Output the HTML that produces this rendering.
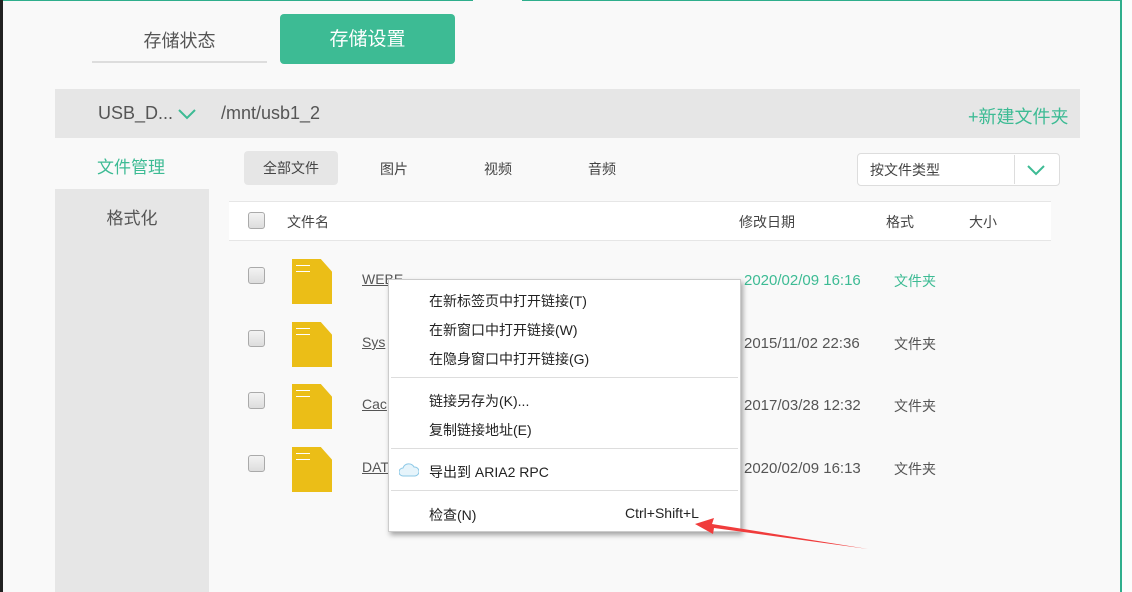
<!DOCTYPE html>
<html><head><meta charset="utf-8"><style>
*{margin:0;padding:0;box-sizing:border-box}
body{width:1132px;height:592px;position:relative;overflow:hidden;background:#f9f9f9;font-family:"Liberation Sans","Noto Sans CJK SC",sans-serif;color:#555}
.a{position:absolute;white-space:nowrap}
.cb{position:absolute;width:17px;height:17px;border:1px solid #aaa;border-radius:3px;background:linear-gradient(#f3f3f3,#ddd)}
.fold{position:absolute;width:40px;height:45px;background:#ebbe17;clip-path:polygon(0 0,72% 0,100% 28%,100% 100%,0 100%)}
.fold:before{content:"";position:absolute;left:4px;top:6px;width:14px;height:5px;border-top:1px solid #fff;border-bottom:1px solid #fff}
.menu .a{font-size:14px;color:#222}
.sep{position:absolute;left:2px;right:2px;height:1px;background:#ddd}
</style></head><body>
<div class="a" style="left:0;top:0;width:3px;height:592px;background:#222"></div>
<div class="a" style="left:3px;top:0;width:470px;height:1px;background:#2eae8c"></div>
<div class="a" style="left:522px;top:0;width:600px;height:1px;background:#2eae8c"></div>
<div class="a" style="left:1120px;top:0;width:2px;height:592px;background:#2eae8c"></div>
<div class="a" style="left:1122px;top:0;width:10px;height:592px;background:#fcfcfc"></div>

<div class="a" style="left:92px;top:27px;width:175px;text-align:center;font-size:18px;color:#555">存储状态</div>
<div class="a" style="left:92px;top:61px;width:175px;height:2px;background:#ddd"></div>
<div class="a" style="left:280px;top:14px;width:175px;height:50px;background:#3dbb94;border-radius:4px;color:#fff;font-size:19px;text-align:center;line-height:52px">存储设置</div>

<div class="a" style="left:55px;top:89px;width:1025px;height:49px;background:#e6e6e6"></div>
<div class="a" style="left:98px;top:103px;font-size:18px;color:#555">USB_D...</div>
<svg class="a" style="left:178px;top:108px" width="18" height="12"><path d="M1 2l8 8 8-8" stroke="#3dbb94" stroke-width="2" fill="none"/></svg>
<div class="a" style="left:221px;top:103px;font-size:18px;color:#555">/mnt/usb1_2</div>
<div class="a" style="left:968px;top:103px;font-size:18px;color:#3dbb94">+新建文件夹</div>

<div class="a" style="left:97px;top:153px;font-size:17px;color:#3dbb94">文件管理</div>
<div class="a" style="left:55px;top:189px;width:154px;height:403px;background:#e6e6e6"></div>
<div class="a" style="left:55px;top:204px;width:154px;text-align:center;font-size:17px;color:#555">格式化</div>

<div class="a" style="left:244px;top:151px;width:94px;height:34px;background:#e6e6e6;border-radius:4px;font-size:14px;color:#444;text-align:center;line-height:34px">全部文件</div>
<div class="a" style="left:380px;top:159px;font-size:14px;color:#444">图片</div>
<div class="a" style="left:484px;top:159px;font-size:14px;color:#444">视频</div>
<div class="a" style="left:588px;top:159px;font-size:14px;color:#444">音频</div>
<div class="a" style="left:857px;top:153px;width:203px;height:33px;border:1px solid #ddd;border-radius:4px;background:#fff"></div>
<div class="a" style="left:870px;top:160px;font-size:14px;color:#444">按文件类型</div>
<div class="a" style="left:1014px;top:155px;width:1px;height:29px;background:#ddd"></div>
<svg class="a" style="left:1027px;top:164px" width="18" height="12"><path d="M1 2l8 8 8-8" stroke="#3dbb94" stroke-width="2" fill="none"/></svg>

<div class="a" style="left:229px;top:201px;width:822px;height:40px;background:#fff;border-top:1px solid #e6e6e6;border-bottom:1px solid #e6e6e6"></div>
<div class="cb" style="left:248px;top:212px"></div>
<div class="a" style="left:287px;top:212px;font-size:14px;color:#444">文件名</div>
<div class="a" style="left:739px;top:212px;font-size:14px;color:#444">修改日期</div>
<div class="a" style="left:886px;top:212px;font-size:14px;color:#444">格式</div>
<div class="a" style="left:969px;top:212px;font-size:14px;color:#444">大小</div>

<div class="cb" style="left:248px;top:267px"></div><div class="fold" style="left:292px;top:259px"></div>
<div class="a" style="left:362px;top:271px;font-size:14px;text-decoration:underline">WEBE</div>
<div class="a" style="left:744px;top:272px;font-size:15px;color:#3dbb94">2020/02/09 16:16</div>
<div class="a" style="left:894px;top:271px;font-size:14px;color:#3dbb94">文件夹</div>

<div class="cb" style="left:248px;top:330px"></div><div class="fold" style="left:292px;top:322px"></div>
<div class="a" style="left:362px;top:334px;font-size:14px;text-decoration:underline">Sys</div>
<div class="a" style="left:744px;top:335px;font-size:15px">2015/11/02 22:36</div>
<div class="a" style="left:894px;top:334px;font-size:14px">文件夹</div>

<div class="cb" style="left:248px;top:392px"></div><div class="fold" style="left:292px;top:384px"></div>
<div class="a" style="left:362px;top:396px;font-size:14px;text-decoration:underline">Cac</div>
<div class="a" style="left:744px;top:397px;font-size:15px">2017/03/28 12:32</div>
<div class="a" style="left:894px;top:396px;font-size:14px">文件夹</div>

<div class="cb" style="left:248px;top:455px"></div><div class="fold" style="left:292px;top:447px"></div>
<div class="a" style="left:362px;top:459px;font-size:14px;text-decoration:underline">DAT</div>
<div class="a" style="left:744px;top:460px;font-size:15px">2020/02/09 16:13</div>
<div class="a" style="left:894px;top:459px;font-size:14px">文件夹</div>

<div class="a menu" style="left:388px;top:279px;width:353px;height:253px;background:#fff;border:1px solid #ccc;box-shadow:2px 3px 5px rgba(0,0,0,.35)">
<div class="a" style="left:40px;top:11px">在新标签页中打开链接(T)</div>
<div class="a" style="left:40px;top:40px">在新窗口中打开链接(W)</div>
<div class="a" style="left:40px;top:69px">在隐身窗口中打开链接(G)</div>
<div class="sep" style="top:97px"></div>
<div class="a" style="left:40px;top:111px">链接另存为(K)...</div>
<div class="a" style="left:40px;top:140px">复制链接地址(E)</div>
<div class="sep" style="top:168px"></div>
<svg class="a" style="left:10px;top:182px" width="20" height="16"><path d="M4 14a4 4 0 0 1 0-8 6 6 0 0 1 11-1 4.5 4.5 0 0 1 1 9z" fill="#e6f4fb" stroke="#8cc8e6"/></svg>
<div class="a" style="left:40px;top:182px">导出到 ARIA2 RPC</div>
<div class="sep" style="top:210px"></div>
<div class="a" style="left:40px;top:225px">检查(N)</div>
<div class="a" style="left:236px;top:225px">Ctrl+Shift+L</div>
</div>
<svg class="a" style="left:690px;top:510px" width="190" height="45"><path d="M178 39L22 14l2-6L5 14l18 10 1-6z" fill="#f03c3c"/></svg>
</body></html>
